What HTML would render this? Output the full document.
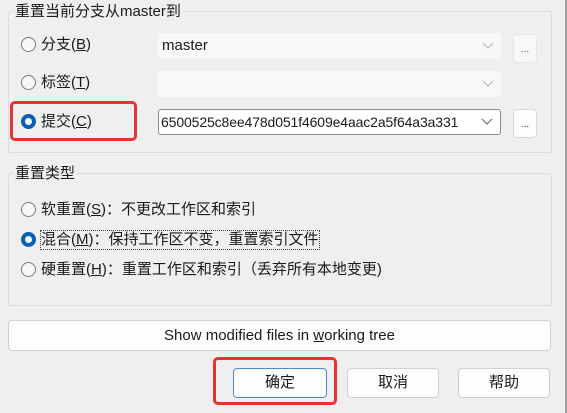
<!DOCTYPE html>
<html><head><meta charset="utf-8"><style>
*{box-sizing:border-box;margin:0;padding:0}
body{width:567px;height:413px;background:#efefef;position:relative;overflow:hidden;font-family:"Liberation Sans","Noto Sans CJK SC",sans-serif;font-size:15px;color:#1a1a1a}
.abs{position:absolute}
.grp{position:absolute;border:1px solid #dcdcdc;border-radius:2px}
.gt{position:absolute;background:#efefef;padding:0 2px;line-height:18px;font-size:15px}
.radio{position:absolute;width:15px;height:15px;border:1px solid #7a7a7a;border-radius:50%;background:#f7f7f7}
.radio.on{border:none;background:#0a5fb4}
.radio.on::after{content:"";position:absolute;left:4px;top:4px;width:7px;height:7px;border-radius:50%;background:#fff}
.lbl{position:absolute;line-height:18px;white-space:nowrap}
.combo{position:absolute;background:#f8f8f8;border-radius:3px;height:26px;line-height:26px;padding-left:4px;font-size:15px}
.combo svg{position:absolute;right:7px;top:9px}
.dots{position:absolute;width:24px;height:29px;background:#f8f8f8;border:1px solid #e6e6e6;border-radius:4px;text-align:center;line-height:30px;font-size:10px;color:#555}
.btn{position:absolute;background:#fdfdfd;border:1px solid #d0d0d0;border-radius:4px;text-align:center;font-size:14px}
.red{position:absolute;border:3px solid #e8322e;border-radius:5px}
u{text-decoration:underline}
</style></head><body>
<div class="grp" style="left:8px;top:11px;width:544px;height:142px"></div>
<div class="gt" style="left:13px;top:3px">重置当前分支从master到</div>

<div class="radio" style="left:21px;top:37px"></div>
<div class="lbl" style="left:41px;top:36px">分支(<u>B</u>)</div>
<div class="combo" style="left:158px;top:33px;width:343px">master<svg width="12" height="7"><path d="M1 1l5 5 5-5" stroke="#b0b0b0" fill="none"/></svg></div>
<div class="dots" style="left:513px;top:34px">...</div>

<div class="radio" style="left:21px;top:75px"></div>
<div class="lbl" style="left:41px;top:74px">标签(<u>T</u>)</div>
<div class="combo" style="left:158px;top:71px;width:343px"><svg width="12" height="7"><path d="M1 1l5 5 5-5" stroke="#b0b0b0" fill="none"/></svg></div>

<div class="radio on" style="left:21px;top:114px"></div>
<div class="lbl" style="left:41px;top:113px">提交(<u>C</u>)</div>
<div class="combo" style="left:158px;top:109px;width:343px;background:#fff;border:1px solid #8a8a8a;line-height:24px;padding-left:2px;font-size:14px;letter-spacing:-0.12px">6500525c8ee478d051f4609e4aac2a5f64a3a331<svg width="12" height="7" style="top:8px"><path d="M1 1l5 5 5-5" stroke="#666" fill="none"/></svg></div>
<div class="dots" style="left:513px;top:109px;background:#fdfdfd;border-color:#d8d8d8;color:#222">...</div>
<div class="red" style="left:10px;top:101px;width:127px;height:40px"></div>

<div class="grp" style="left:8px;top:173px;width:544px;height:133px"></div>
<div class="gt" style="left:13px;top:165px">重置类型</div>

<div class="radio" style="left:21px;top:202px"></div>
<div class="lbl" style="left:41px;top:201px">软重置(<u>S</u>)：不更改工作区和索引</div>
<div class="radio on" style="left:21px;top:232px"></div>
<div class="lbl" style="left:41px;top:231px;outline:1px dotted #444">混合(<u>M</u>)：保持工作区不变，重置索引文件</div>
<div class="radio" style="left:21px;top:262px"></div>
<div class="lbl" style="left:41px;top:261px">硬重置(<u>H</u>)：重置工作区和索引（丢弃所有本地变更)</div>

<div class="btn" style="left:8px;top:320px;width:543px;height:31px;line-height:29px;font-size:15px">Show modified files in <u>w</u>orking tree</div>

<div class="btn" style="left:233px;top:368px;width:94px;height:30px;line-height:28px;border-color:#4a8ad0;font-size:15px">确定</div>
<div class="btn" style="left:347px;top:368px;width:92px;height:30px;line-height:28px;font-size:15px">取消</div>
<div class="btn" style="left:458px;top:368px;width:92px;height:30px;line-height:28px;font-size:15px">帮助</div>
<div class="red" style="left:213px;top:357px;width:124px;height:48px"></div>

<div class="abs" style="left:565px;top:0;width:2px;height:413px;background:#a0a0a0"></div>
</body></html>
